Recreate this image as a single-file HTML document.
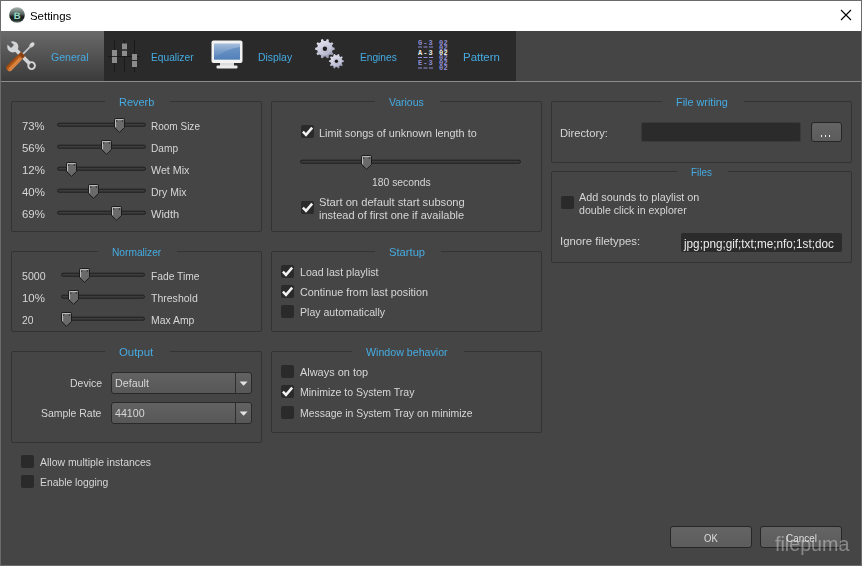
<!DOCTYPE html>
<html><head><meta charset="utf-8"><style>
html,body{margin:0;padding:0;width:862px;height:566px;overflow:hidden;background:#454545;}
.t{position:absolute;white-space:nowrap;font-family:"Liberation Sans",sans-serif;font-size:11.5px;line-height:20px;color:#d6d6d6;transform-origin:0 0;}
svg{display:block}
</style></head><body>
<div style="position:absolute;left:0;top:0;width:862px;height:566px;box-sizing:border-box;border:1px solid #6b6b6b;background:#454545"></div>
<div style="position:absolute;left:1px;top:1px;width:860px;height:30px;background:#ffffff;"></div>
<svg style="position:absolute;left:9px;top:7px" width="16" height="16"><defs><linearGradient id="gb" x1="0" y1="0" x2="0" y2="1"><stop offset="0" stop-color="#a8b4b0"/><stop offset="0.45" stop-color="#56625e"/><stop offset="0.62" stop-color="#141a18"/><stop offset="0.85" stop-color="#26302d"/><stop offset="1" stop-color="#7a8884"/></linearGradient></defs><circle cx="8" cy="8" r="7.8" fill="url(#gb)"/><text x="8.2" y="11.6" font-family="Liberation Sans" font-weight="bold" font-size="9.5" text-anchor="middle" fill="#9cdccc" stroke="#203c36" stroke-width="0.6" paint-order="stroke" text-rendering="geometricPrecision">B</text></svg>
<div class="t" style="left:30.40px;top:5.50px;color:#000;font-size:11.5px;transform:scaleX(0.9928);">Settings</div>
<svg style="position:absolute;left:840px;top:9px" width="12" height="12"><path d="M1 1 L11 11 M11 1 L1 11" stroke="#000" stroke-width="1.1"/></svg>
<div style="position:absolute;left:1px;top:31px;width:515px;height:50px;background:#2a2a2a;"></div>
<div style="position:absolute;left:1px;top:31px;width:103px;height:50px;background:linear-gradient(#6a6a6a,#3b3b3b);"></div>
<div style="position:absolute;left:1px;top:81px;width:860px;height:1px;background:#8c8c8c;"></div>
<div class="t" style="left:51.00px;top:47.30px;color:#45abe2;font-size:11.5px;transform:scaleX(0.9168);">General</div>
<div class="t" style="left:151.10px;top:47.30px;color:#45abe2;font-size:11.5px;transform:scaleX(0.8875);">Equalizer</div>
<div class="t" style="left:257.90px;top:47.30px;color:#45abe2;font-size:11.5px;transform:scaleX(0.9037);">Display</div>
<div class="t" style="left:360.00px;top:47.30px;color:#45abe2;font-size:11.5px;transform:scaleX(0.8850);">Engines</div>
<div class="t" style="left:462.80px;top:47.30px;color:#45abe2;font-size:11.5px;transform:scaleX(0.9950);">Pattern</div>
<svg style="position:absolute;left:0px;top:36px" width="44" height="40">
<defs><mask id="wm"><rect x="-20" y="-20" width="80" height="80" fill="#fff"/>
<rect x="-8" y="-2.1" width="7.6" height="4.2" fill="#000"/><circle cx="26.6" cy="0" r="2.4" fill="#000"/></mask>
<linearGradient id="hg" x1="0" y1="0" x2="0" y2="1"><stop offset="0" stop-color="#e39050"/><stop offset="0.5" stop-color="#c4651f"/><stop offset="1" stop-color="#8a4212"/></linearGradient></defs>
<g transform="translate(12.8,10.8) rotate(45)">
<g mask="url(#wm)" fill="#d2d4d6">
<circle cx="0" cy="0" r="5.6"/>
<rect x="2" y="-1.9" width="23" height="3.8"/>
<circle cx="26.6" cy="0" r="4.3"/>
</g></g>
<g transform="translate(33.6,7.2) rotate(134.5)">
<ellipse cx="2.4" cy="0" rx="3" ry="1.9" fill="#d8dadc"/>
<rect x="3" y="-0.8" width="13" height="1.6" fill="#c8cacc"/>
<rect x="15" y="-3" width="4.5" height="6" rx="1" fill="#8a4010"/>
<rect x="18.5" y="-3.3" width="19" height="6.6" rx="2.6" fill="url(#hg)"/>
<rect x="20.5" y="-1.2" width="15" height="1" fill="#f0a060" opacity="0.7"/>
</g>
</svg>
<svg style="position:absolute;left:104px;top:36px" width="40" height="40">
<g fill="#1a1a1a"><rect x="10" y="4" width="1" height="32"/><rect x="20" y="4" width="1" height="32"/><rect x="30" y="4" width="1" height="32"/><rect x="4" y="20" width="32" height="1"/></g>
<g fill="#8c8c8c"><rect x="8" y="14" width="5" height="6"/><rect x="8" y="21" width="5" height="6"/>
<rect x="18" y="7.5" width="5" height="6"/><rect x="18" y="14.5" width="5" height="5.5"/>
<rect x="28" y="18" width="5" height="6"/><rect x="28" y="25" width="5" height="6"/></g><g fill="#2a2a2a"><rect x="8" y="20" width="5" height="1"/><rect x="18" y="13.5" width="5" height="1"/><rect x="28" y="24" width="5" height="1"/></g></svg>
<svg style="position:absolute;left:211px;top:40px" width="32" height="30">
<defs><linearGradient id="scr" x1="0" y1="0" x2="0" y2="1"><stop offset="0" stop-color="#a6bedc"/><stop offset="1" stop-color="#4c7cb6"/></linearGradient></defs>
<rect x="0.5" y="0.5" width="31" height="22.5" rx="2" fill="#f2f2f2"/>
<rect x="3" y="3.5" width="26" height="16" fill="url(#scr)"/>
<path d="M3 19.5 Q16 8 29 7 V19.5 Z" fill="#5584bc" opacity="0.6"/>
<rect x="9" y="23" width="14" height="3" fill="#dcdcdc"/>
<rect x="5.5" y="25.5" width="21" height="3" rx="1" fill="#ececec"/>
</svg>
<svg style="position:absolute;left:305px;top:33px" width="50" height="40"><defs><linearGradient id="gr" x1="0.2" y1="0" x2="0.8" y2="1"><stop offset="0" stop-color="#e6e6f2"/><stop offset="0.6" stop-color="#c0c0d6"/><stop offset="1" stop-color="#8a8aa4"/></linearGradient></defs><polygon points="27.60,14.23 29.64,14.66 29.64,16.74 27.60,17.17 26.99,19.04 28.40,20.58 27.17,22.27 25.27,21.42 23.68,22.57 23.90,24.64 21.92,25.29 20.88,23.48 18.92,23.48 17.88,25.29 15.90,24.64 16.12,22.57 14.53,21.42 12.63,22.27 11.40,20.58 12.81,19.04 12.20,17.17 10.16,16.74 10.16,14.66 12.20,14.23 12.81,12.36 11.40,10.82 12.63,9.13 14.53,9.98 16.12,8.83 15.90,6.76 17.88,6.11 18.92,7.92 20.88,7.92 21.92,6.11 23.90,6.76 23.68,8.83 25.27,9.98 27.17,9.13 28.40,10.82 26.99,12.36" fill="url(#gr)"/><circle cx="19.9" cy="15.7" r="5.39" fill="none" stroke="#d8d8ea" stroke-width="1" opacity="0.6"/><circle cx="19.9" cy="15.7" r="2.2" fill="#1e1e1e"/><polygon points="37.22,27.09 38.76,27.41 38.76,28.99 37.22,29.31 36.76,30.72 37.82,31.89 36.89,33.16 35.45,32.52 34.25,33.39 34.42,34.95 32.92,35.44 32.14,34.07 30.66,34.07 29.88,35.44 28.38,34.95 28.55,33.39 27.35,32.52 25.91,33.16 24.98,31.89 26.04,30.72 25.58,29.31 24.04,28.99 24.04,27.41 25.58,27.09 26.04,25.68 24.98,24.51 25.91,23.24 27.35,23.88 28.55,23.01 28.38,21.45 29.88,20.96 30.66,22.33 32.14,22.33 32.92,20.96 34.42,21.45 34.25,23.01 35.45,23.88 36.89,23.24 37.82,24.51 36.76,25.68" fill="url(#gr)"/><circle cx="31.4" cy="28.2" r="4.07" fill="none" stroke="#d8d8ea" stroke-width="1" opacity="0.6"/><circle cx="31.4" cy="28.2" r="1.7" fill="#1e1e1e"/></svg>
<svg style="position:absolute;left:418px;top:38px" width="34" height="34" font-family="Liberation Mono" font-weight="bold">
<g font-size="7" fill="#8e8ed8" letter-spacing="0.3">
<text x="0" y="6.5" letter-spacing="1">G-3</text><text x="21" y="6.5">02</text>
<text x="0" y="27" letter-spacing="1">E-3</text>
<text x="21" y="11.5">02</text><text x="21" y="21.5">02</text><text x="21" y="26.5">02</text><text x="21" y="31.5">02</text>
</g>
<g fill="#8e8ed8"><rect x="0" y="8.5" width="4" height="1"/><rect x="5.5" y="8.5" width="4" height="1"/><rect x="11" y="8.5" width="4" height="1"/>
<rect x="0" y="19" width="4" height="1"/><rect x="5.5" y="19" width="4" height="1"/><rect x="11" y="19" width="4" height="1"/>
<rect x="0" y="29.5" width="4" height="1"/><rect x="5.5" y="29.5" width="4" height="1"/><rect x="11" y="29.5" width="4" height="1"/></g>
<g font-size="7" fill="#f0f0f0" letter-spacing="0.3"><text x="0" y="16.5" letter-spacing="1">A-3</text><text x="21" y="16.5">02</text></g>
</svg>
<div style="position:absolute;left:11px;top:101px;width:251px;height:131px;box-sizing:border-box;border:1px solid #333;border-radius:2px;"></div>
<div style="position:absolute;left:105.30000000000001px;top:100px;width:65px;height:3px;background:#454545;"></div>
<div class="t" style="left:119.30px;top:91.80px;color:#45abe2;font-size:11.5px;transform:scaleX(0.9543);">Reverb</div>
<div style="position:absolute;left:11px;top:251px;width:251px;height:81px;box-sizing:border-box;border:1px solid #333;border-radius:2px;"></div>
<div style="position:absolute;left:98.10000000000001px;top:250px;width:79.4px;height:3px;background:#454545;"></div>
<div class="t" style="left:112.10px;top:241.80px;color:#45abe2;font-size:11.5px;transform:scaleX(0.8859);">Normalizer</div>
<div style="position:absolute;left:11px;top:351px;width:251px;height:92px;box-sizing:border-box;border:1px solid #333;border-radius:2px;"></div>
<div style="position:absolute;left:105.30000000000001px;top:350px;width:65px;height:3px;background:#454545;"></div>
<div class="t" style="left:119.30px;top:341.80px;color:#45abe2;font-size:11.5px;transform:scaleX(0.9907);">Output</div>
<div style="position:absolute;left:271px;top:101px;width:271px;height:131px;box-sizing:border-box;border:1px solid #333;border-radius:2px;"></div>
<div style="position:absolute;left:375.3px;top:100px;width:65px;height:3px;background:#454545;"></div>
<div class="t" style="left:389.30px;top:91.80px;color:#45abe2;font-size:11.5px;transform:scaleX(0.9117);">Various</div>
<div style="position:absolute;left:271px;top:251px;width:271px;height:81px;box-sizing:border-box;border:1px solid #333;border-radius:2px;"></div>
<div style="position:absolute;left:374.95px;top:250px;width:65.7px;height:3px;background:#454545;"></div>
<div class="t" style="left:388.95px;top:241.80px;color:#45abe2;font-size:11.5px;transform:scaleX(0.9732);">Startup</div>
<div style="position:absolute;left:271px;top:351px;width:271px;height:82px;box-sizing:border-box;border:1px solid #333;border-radius:2px;"></div>
<div style="position:absolute;left:351.90000000000003px;top:350px;width:111.8px;height:3px;background:#454545;"></div>
<div class="t" style="left:365.90px;top:341.80px;color:#45abe2;font-size:11.5px;transform:scaleX(0.9255);">Window behavior</div>
<div style="position:absolute;left:551px;top:101px;width:301px;height:62px;box-sizing:border-box;border:1px solid #333;border-radius:2px;"></div>
<div style="position:absolute;left:662.05px;top:100px;width:81.5px;height:3px;background:#454545;"></div>
<div class="t" style="left:676.05px;top:91.80px;color:#45abe2;font-size:11.5px;transform:scaleX(0.9439);">File writing</div>
<div style="position:absolute;left:551px;top:171px;width:301px;height:92px;box-sizing:border-box;border:1px solid #333;border-radius:2px;"></div>
<div style="position:absolute;left:677.25px;top:170px;width:51.1px;height:3px;background:#454545;"></div>
<div class="t" style="left:691.25px;top:161.80px;color:#45abe2;font-size:11.5px;transform:scaleX(0.8602);">Files</div>
<svg style="position:absolute;left:57px;top:122px" width="89" height="6"><rect x="0.5" y="1.2" width="88" height="3" rx="1.5" fill="#3c3c3c" stroke="#1f1f1f"/></svg>
<svg style="position:absolute;left:114.10000000000001px;top:118.2px" width="11" height="15"><path d="M0.5 1.5 Q0.5 0.5 1.5 0.5 H9.5 Q10.5 0.5 10.5 1.5 V9.5 L5.5 14.3 L0.5 9.5 Z" fill="#6a6a6a" stroke="#1c1c1c"/><path d="M1.6 9 V1.6 H9.4" fill="none" stroke="#c4c4c4" stroke-width="1"/><rect x="2.2" y="2.2" width="1" height="1.6" fill="#2a2a2a"/><rect x="7.8" y="2.2" width="1" height="1.6" fill="#2a2a2a"/></svg>
<div class="t" style="left:22.00px;top:115.60px;color:#d6d6d6;font-size:11.5px;transform:scaleX(0.9784);">73%</div>
<div class="t" style="left:151.40px;top:115.60px;color:#d6d6d6;font-size:11.5px;transform:scaleX(0.8702);">Room Size</div>
<svg style="position:absolute;left:57px;top:144px" width="89" height="6"><rect x="0.5" y="1.2" width="88" height="3" rx="1.5" fill="#3c3c3c" stroke="#1f1f1f"/></svg>
<svg style="position:absolute;left:100.9px;top:140.2px" width="11" height="15"><path d="M0.5 1.5 Q0.5 0.5 1.5 0.5 H9.5 Q10.5 0.5 10.5 1.5 V9.5 L5.5 14.3 L0.5 9.5 Z" fill="#6a6a6a" stroke="#1c1c1c"/><path d="M1.6 9 V1.6 H9.4" fill="none" stroke="#c4c4c4" stroke-width="1"/><rect x="2.2" y="2.2" width="1" height="1.6" fill="#2a2a2a"/><rect x="7.8" y="2.2" width="1" height="1.6" fill="#2a2a2a"/></svg>
<div class="t" style="left:22.00px;top:137.60px;color:#d6d6d6;font-size:11.5px;transform:scaleX(0.9960);">56%</div>
<div class="t" style="left:151.40px;top:137.60px;color:#d6d6d6;font-size:11.5px;transform:scaleX(0.8818);">Damp</div>
<svg style="position:absolute;left:57px;top:166px" width="89" height="6"><rect x="0.5" y="1.2" width="88" height="3" rx="1.5" fill="#3c3c3c" stroke="#1f1f1f"/></svg>
<svg style="position:absolute;left:65.9px;top:162.2px" width="11" height="15"><path d="M0.5 1.5 Q0.5 0.5 1.5 0.5 H9.5 Q10.5 0.5 10.5 1.5 V9.5 L5.5 14.3 L0.5 9.5 Z" fill="#6a6a6a" stroke="#1c1c1c"/><path d="M1.6 9 V1.6 H9.4" fill="none" stroke="#c4c4c4" stroke-width="1"/><rect x="2.2" y="2.2" width="1" height="1.6" fill="#2a2a2a"/><rect x="7.8" y="2.2" width="1" height="1.6" fill="#2a2a2a"/></svg>
<div class="t" style="left:22.00px;top:159.60px;color:#d6d6d6;font-size:11.5px;transform:scaleX(0.9960);">12%</div>
<div class="t" style="left:151.40px;top:159.60px;color:#d6d6d6;font-size:11.5px;transform:scaleX(0.9310);">Wet Mix</div>
<svg style="position:absolute;left:57px;top:188px" width="89" height="6"><rect x="0.5" y="1.2" width="88" height="3" rx="1.5" fill="#3c3c3c" stroke="#1f1f1f"/></svg>
<svg style="position:absolute;left:88.2px;top:184.2px" width="11" height="15"><path d="M0.5 1.5 Q0.5 0.5 1.5 0.5 H9.5 Q10.5 0.5 10.5 1.5 V9.5 L5.5 14.3 L0.5 9.5 Z" fill="#6a6a6a" stroke="#1c1c1c"/><path d="M1.6 9 V1.6 H9.4" fill="none" stroke="#c4c4c4" stroke-width="1"/><rect x="2.2" y="2.2" width="1" height="1.6" fill="#2a2a2a"/><rect x="7.8" y="2.2" width="1" height="1.6" fill="#2a2a2a"/></svg>
<div class="t" style="left:22.00px;top:181.60px;color:#d6d6d6;font-size:11.5px;transform:scaleX(0.9960);">40%</div>
<div class="t" style="left:151.40px;top:181.60px;color:#d6d6d6;font-size:11.5px;transform:scaleX(0.9104);">Dry Mix</div>
<svg style="position:absolute;left:57px;top:210px" width="89" height="6"><rect x="0.5" y="1.2" width="88" height="3" rx="1.5" fill="#3c3c3c" stroke="#1f1f1f"/></svg>
<svg style="position:absolute;left:110.7px;top:206.2px" width="11" height="15"><path d="M0.5 1.5 Q0.5 0.5 1.5 0.5 H9.5 Q10.5 0.5 10.5 1.5 V9.5 L5.5 14.3 L0.5 9.5 Z" fill="#6a6a6a" stroke="#1c1c1c"/><path d="M1.6 9 V1.6 H9.4" fill="none" stroke="#c4c4c4" stroke-width="1"/><rect x="2.2" y="2.2" width="1" height="1.6" fill="#2a2a2a"/><rect x="7.8" y="2.2" width="1" height="1.6" fill="#2a2a2a"/></svg>
<div class="t" style="left:22.00px;top:203.60px;color:#d6d6d6;font-size:11.5px;transform:scaleX(0.9960);">69%</div>
<div class="t" style="left:151.40px;top:203.60px;color:#d6d6d6;font-size:11.5px;transform:scaleX(0.9586);">Width</div>
<svg style="position:absolute;left:61px;top:272px" width="84" height="6"><rect x="0.5" y="1.2" width="83" height="3" rx="1.5" fill="#3c3c3c" stroke="#1f1f1f"/></svg>
<svg style="position:absolute;left:78.7px;top:268.2px" width="11" height="15"><path d="M0.5 1.5 Q0.5 0.5 1.5 0.5 H9.5 Q10.5 0.5 10.5 1.5 V9.5 L5.5 14.3 L0.5 9.5 Z" fill="#6a6a6a" stroke="#1c1c1c"/><path d="M1.6 9 V1.6 H9.4" fill="none" stroke="#c4c4c4" stroke-width="1"/><rect x="2.2" y="2.2" width="1" height="1.6" fill="#2a2a2a"/><rect x="7.8" y="2.2" width="1" height="1.6" fill="#2a2a2a"/></svg>
<div class="t" style="left:22.00px;top:265.60px;color:#d6d6d6;font-size:11.5px;transform:scaleX(0.9211);">5000</div>
<div class="t" style="left:150.70px;top:265.60px;color:#d6d6d6;font-size:11.5px;transform:scaleX(0.8921);">Fade Time</div>
<svg style="position:absolute;left:61px;top:294px" width="84" height="6"><rect x="0.5" y="1.2" width="83" height="3" rx="1.5" fill="#3c3c3c" stroke="#1f1f1f"/></svg>
<svg style="position:absolute;left:68.2px;top:290.2px" width="11" height="15"><path d="M0.5 1.5 Q0.5 0.5 1.5 0.5 H9.5 Q10.5 0.5 10.5 1.5 V9.5 L5.5 14.3 L0.5 9.5 Z" fill="#6a6a6a" stroke="#1c1c1c"/><path d="M1.6 9 V1.6 H9.4" fill="none" stroke="#c4c4c4" stroke-width="1"/><rect x="2.2" y="2.2" width="1" height="1.6" fill="#2a2a2a"/><rect x="7.8" y="2.2" width="1" height="1.6" fill="#2a2a2a"/></svg>
<div class="t" style="left:22.00px;top:287.60px;color:#d6d6d6;font-size:11.5px;transform:scaleX(0.9960);">10%</div>
<div class="t" style="left:150.70px;top:287.60px;color:#d6d6d6;font-size:11.5px;transform:scaleX(0.9144);">Threshold</div>
<svg style="position:absolute;left:61px;top:316px" width="84" height="6"><rect x="0.5" y="1.2" width="83" height="3" rx="1.5" fill="#3c3c3c" stroke="#1f1f1f"/></svg>
<svg style="position:absolute;left:60.8px;top:312.2px" width="11" height="15"><path d="M0.5 1.5 Q0.5 0.5 1.5 0.5 H9.5 Q10.5 0.5 10.5 1.5 V9.5 L5.5 14.3 L0.5 9.5 Z" fill="#6a6a6a" stroke="#1c1c1c"/><path d="M1.6 9 V1.6 H9.4" fill="none" stroke="#c4c4c4" stroke-width="1"/><rect x="2.2" y="2.2" width="1" height="1.6" fill="#2a2a2a"/><rect x="7.8" y="2.2" width="1" height="1.6" fill="#2a2a2a"/></svg>
<div class="t" style="left:22.00px;top:309.60px;color:#d6d6d6;font-size:11.5px;transform:scaleX(0.8955);">20</div>
<div class="t" style="left:150.70px;top:309.60px;color:#d6d6d6;font-size:11.5px;transform:scaleX(0.9051);">Max Amp</div>
<div class="t" style="left:69.50px;top:372.80px;color:#d6d6d6;font-size:11.5px;transform:scaleX(0.9121);">Device</div>
<div class="t" style="left:41.20px;top:402.80px;color:#d6d6d6;font-size:11.5px;transform:scaleX(0.9079);">Sample Rate</div>
<div style="position:absolute;left:111px;top:372px;width:141px;height:22px;box-sizing:border-box;border:1px solid #2a2a2a;border-radius:3px;background:linear-gradient(#626262,#575757);"></div>
<div style="position:absolute;left:235px;top:373px;width:1px;height:20px;background:#2e2e2e;"></div>
<svg style="position:absolute;left:239px;top:381px" width="10" height="6"><path d="M0.6 0.5 H8.6 L4.6 4.8 Z" fill="#e4e4e4"/></svg>
<div class="t" style="left:115.00px;top:372.80px;color:#d6d6d6;font-size:11.5px;transform:scaleX(0.9317);">Default</div>
<div style="position:absolute;left:111px;top:402px;width:141px;height:22px;box-sizing:border-box;border:1px solid #2a2a2a;border-radius:3px;background:linear-gradient(#626262,#575757);"></div>
<div style="position:absolute;left:235px;top:403px;width:1px;height:20px;background:#2e2e2e;"></div>
<svg style="position:absolute;left:239px;top:411px" width="10" height="6"><path d="M0.6 0.5 H8.6 L4.6 4.8 Z" fill="#e4e4e4"/></svg>
<div class="t" style="left:115.00px;top:402.80px;color:#d6d6d6;font-size:11.5px;transform:scaleX(0.9277);">44100</div>
<div style="position:absolute;left:21px;top:455px;width:13px;height:13px;background:#2a2a2a;border-radius:2px;"></div>
<div class="t" style="left:40.00px;top:452.00px;color:#d6d6d6;font-size:11.5px;transform:scaleX(0.9098);">Allow multiple instances</div>
<div style="position:absolute;left:21px;top:475px;width:13px;height:13px;background:#2a2a2a;border-radius:2px;"></div>
<div class="t" style="left:40.00px;top:472.00px;color:#d6d6d6;font-size:11.5px;transform:scaleX(0.8983);">Enable logging</div>
<div style="position:absolute;left:301px;top:125px;width:13px;height:13px;background:#2a2a2a;border-radius:2px;"></div>
<svg style="position:absolute;left:301px;top:125px" width="13" height="13"><path d="M1.9 6.6 L5 9.8 L11.2 2.6" fill="none" stroke="#f2f2f2" stroke-width="2.5" stroke-linejoin="miter"/></svg>
<div class="t" style="left:319.00px;top:122.70px;color:#d6d6d6;font-size:11.5px;transform:scaleX(0.9414);">Limit songs of unknown length to</div>
<svg style="position:absolute;left:300px;top:159px" width="221" height="6"><rect x="0.5" y="1.2" width="220" height="3" rx="1.5" fill="#3c3c3c" stroke="#1f1f1f"/></svg>
<svg style="position:absolute;left:360.9px;top:155.2px" width="11" height="15"><path d="M0.5 1.5 Q0.5 0.5 1.5 0.5 H9.5 Q10.5 0.5 10.5 1.5 V9.5 L5.5 14.3 L0.5 9.5 Z" fill="#6a6a6a" stroke="#1c1c1c"/><path d="M1.6 9 V1.6 H9.4" fill="none" stroke="#c4c4c4" stroke-width="1"/><rect x="2.2" y="2.2" width="1" height="1.6" fill="#2a2a2a"/><rect x="7.8" y="2.2" width="1" height="1.6" fill="#2a2a2a"/></svg>
<div class="t" style="left:371.60px;top:172.20px;color:#d6d6d6;font-size:11.5px;transform:scaleX(0.9012);">180 seconds</div>
<div style="position:absolute;left:301px;top:201px;width:13px;height:13px;background:#2a2a2a;border-radius:2px;"></div>
<svg style="position:absolute;left:301px;top:201px" width="13" height="13"><path d="M1.9 6.6 L5 9.8 L11.2 2.6" fill="none" stroke="#f2f2f2" stroke-width="2.5" stroke-linejoin="miter"/></svg>
<div class="t" style="left:319.20px;top:192.20px;color:#d6d6d6;font-size:11.5px;transform:scaleX(0.9704);">Start on default start subsong</div>
<div class="t" style="left:319.20px;top:204.50px;color:#d6d6d6;font-size:11.5px;transform:scaleX(0.9582);">instead of first one if available</div>
<div style="position:absolute;left:281px;top:265px;width:13px;height:13px;background:#2a2a2a;border-radius:2px;"></div>
<svg style="position:absolute;left:281px;top:265px" width="13" height="13"><path d="M1.9 6.6 L5 9.8 L11.2 2.6" fill="none" stroke="#f2f2f2" stroke-width="2.5" stroke-linejoin="miter"/></svg>
<div class="t" style="left:299.60px;top:262.00px;color:#d6d6d6;font-size:11.5px;transform:scaleX(0.9240);">Load last playlist</div>
<div style="position:absolute;left:281px;top:285px;width:13px;height:13px;background:#2a2a2a;border-radius:2px;"></div>
<svg style="position:absolute;left:281px;top:285px" width="13" height="13"><path d="M1.9 6.6 L5 9.8 L11.2 2.6" fill="none" stroke="#f2f2f2" stroke-width="2.5" stroke-linejoin="miter"/></svg>
<div class="t" style="left:299.60px;top:282.00px;color:#d6d6d6;font-size:11.5px;transform:scaleX(0.9399);">Continue from last position</div>
<div style="position:absolute;left:281px;top:305px;width:13px;height:13px;background:#2a2a2a;border-radius:2px;"></div>
<div class="t" style="left:299.60px;top:302.00px;color:#d6d6d6;font-size:11.5px;transform:scaleX(0.9179);">Play automatically</div>
<div style="position:absolute;left:281px;top:365px;width:13px;height:13px;background:#2a2a2a;border-radius:2px;"></div>
<div class="t" style="left:299.60px;top:361.90px;color:#d6d6d6;font-size:11.5px;transform:scaleX(0.9509);">Always on top</div>
<div style="position:absolute;left:281px;top:385px;width:13px;height:13px;background:#2a2a2a;border-radius:2px;"></div>
<svg style="position:absolute;left:281px;top:385px" width="13" height="13"><path d="M1.9 6.6 L5 9.8 L11.2 2.6" fill="none" stroke="#f2f2f2" stroke-width="2.5" stroke-linejoin="miter"/></svg>
<div class="t" style="left:299.60px;top:381.70px;color:#d6d6d6;font-size:11.5px;transform:scaleX(0.9132);">Minimize to System Tray</div>
<div style="position:absolute;left:281px;top:406px;width:13px;height:13px;background:#2a2a2a;border-radius:2px;"></div>
<div class="t" style="left:299.60px;top:402.70px;color:#d6d6d6;font-size:11.5px;transform:scaleX(0.9061);">Message in System Tray on minimize</div>
<div class="t" style="left:560.20px;top:122.60px;color:#d6d6d6;font-size:11.5px;transform:scaleX(0.9734);">Directory:</div>
<div style="position:absolute;left:641px;top:122px;width:160px;height:20px;background:#2b2b2b;border:1px solid #3a3a3a;box-sizing:border-box;border-radius:2px;"></div>
<div style="position:absolute;left:811px;top:122px;width:31px;height:20px;box-sizing:border-box;border:1px solid #262626;border-radius:3px;background:linear-gradient(#646464,#5c5c5c);"></div>
<div style="position:absolute;left:821px;top:134.8px;width:1.3px;height:2.4px;background:#f0f0f0;"></div>
<div style="position:absolute;left:825px;top:134.8px;width:1.3px;height:2.4px;background:#f0f0f0;"></div>
<div style="position:absolute;left:829px;top:134.8px;width:1.3px;height:2.4px;background:#f0f0f0;"></div>
<div style="position:absolute;left:561px;top:196px;width:13px;height:13px;background:#2a2a2a;border-radius:2px;"></div>
<div class="t" style="left:579.40px;top:187.40px;color:#d6d6d6;font-size:11.5px;transform:scaleX(0.9414);">Add sounds to playlist on</div>
<div class="t" style="left:579.40px;top:200.00px;color:#d6d6d6;font-size:11.5px;transform:scaleX(0.9211);">double click in explorer</div>
<div class="t" style="left:559.81px;top:230.80px;color:#d6d6d6;font-size:11.5px;transform:scaleX(0.9864);">Ignore filetypes:</div>
<div style="position:absolute;left:681px;top:233px;width:161px;height:19px;background:#2b2b2b;border-radius:2px;"></div>
<div class="t" style="left:683.98px;top:233.50px;color:#ececec;font-size:12px;transform:scaleX(0.9765);">jpg;png;gif;txt;me;nfo;1st;doc</div>
<div style="position:absolute;left:670px;top:526px;width:82px;height:22px;box-sizing:border-box;border:1px solid #262626;border-radius:3px;background:linear-gradient(#646464,#5c5c5c);"></div>
<div class="t" style="left:704.00px;top:528.00px;color:#dcdcdc;font-size:11.5px;transform:scaleX(0.8262);">OK</div>
<div style="position:absolute;left:760px;top:526px;width:82px;height:22px;box-sizing:border-box;border:1px solid #262626;border-radius:3px;background:linear-gradient(#646464,#5c5c5c);"></div>
<div class="t" style="left:785.80px;top:528.00px;color:#dcdcdc;font-size:11.5px;transform:scaleX(0.8626);">Cancel</div>
<div class="t" style="left:775.00px;top:533.60px;color:rgba(255,255,255,0.36);font-size:20.5px;transform:scaleX(0.9605);">filepuma</div>
</body></html>
